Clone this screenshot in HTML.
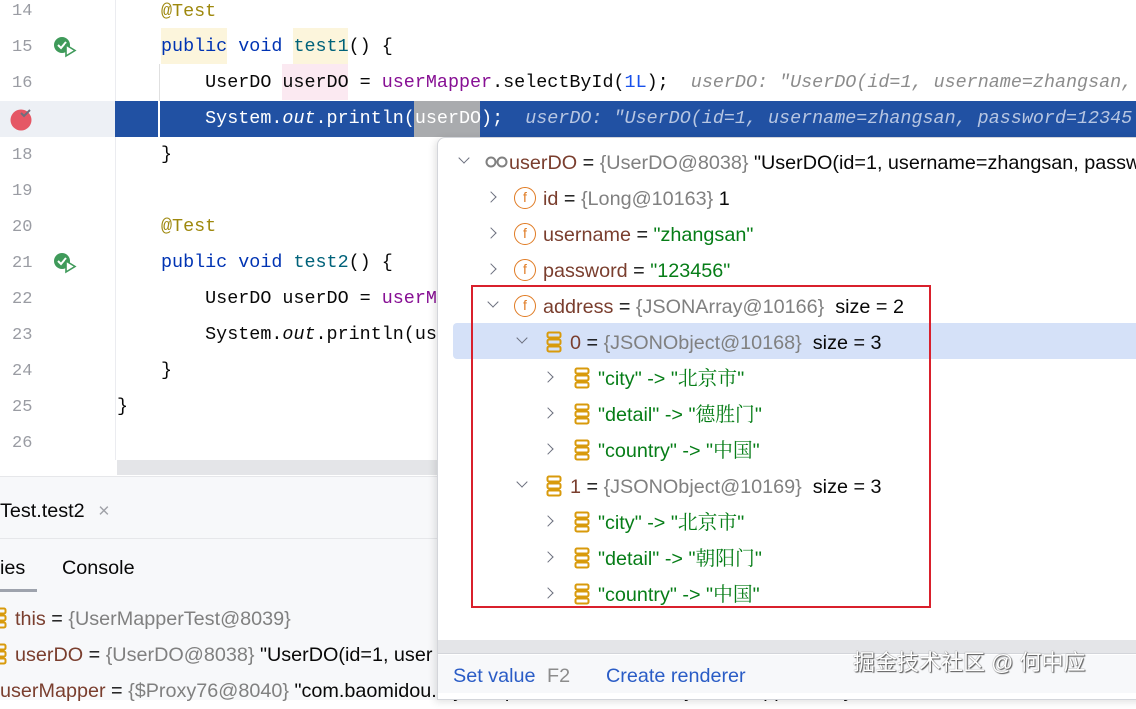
<!DOCTYPE html>
<html><head><meta charset="utf-8"><style>
*{margin:0;padding:0;box-sizing:border-box}
body{width:1136px;height:700px;overflow:hidden;background:#fff;position:relative;font-family:"Liberation Sans","Noto Sans CJK SC",sans-serif}
.a{position:absolute;white-space:nowrap}
.ln{position:absolute;left:12px;width:24px;font:17px "Liberation Mono",monospace;color:#9a9ca3;line-height:36px}
.code{position:absolute;font:18.4px "Liberation Mono",monospace;line-height:36px;color:#080808;white-space:pre}
.kw{color:#0033b3}.an{color:#9e880d}.fn{color:#00627a}.fld{color:#871094}.num{color:#1750eb}
.hint{color:#8c8c8c;font-style:italic}
.t{position:absolute;font-size:19.8px;line-height:36px;color:#080808;white-space:nowrap;margin-top:2px}
.g{color:#808080}.s{color:#067d17}.n{color:#871094}.v{color:#7a3e2e}
.cj{font-family:"Liberation Sans","Noto Serif CJK SC",serif}
.chev{position:absolute;width:8px;height:8px;border-right:1.5px solid #6c707e;border-bottom:1.5px solid #6c707e}
.r{transform:rotate(-45deg)}.d{transform:rotate(45deg)}
.fi{display:inline-block;width:22px;height:22px;border:1.6px solid #e07b23;border-radius:50%;color:#e07b23;font-size:14px;line-height:19px;text-align:center;vertical-align:middle;margin:-3px 7px 0 0;font-style:normal}
.ai{display:inline-block;width:16px;height:22px;vertical-align:middle;margin:-3px 8px 0 0}
</style></head><body>
<svg width="0" height="0" style="position:absolute"><defs><symbol id="arr" viewBox="0 0 16 22"><g fill="none" stroke="#d89a0b" stroke-width="2"><rect x="1.5" y="1.5" width="13" height="5" rx="1.5"/><rect x="1.5" y="8.5" width="13" height="5" rx="1.5"/><rect x="1.5" y="15.5" width="13" height="5" rx="1.5"/></g></symbol></defs></svg>
<!-- gutter -->
<div class="a" style="left:0;top:101px;width:115px;height:36px;background:#edf0f5"></div>
<div class="a" style="left:115px;top:0;width:1px;height:460px;background:#ebecf0"></div>
<div class="ln" style="top:-6px">14</div><div class="ln" style="top:30px">15</div><div class="ln" style="top:66px">16</div><div class="ln" style="top:138px">18</div><div class="ln" style="top:174px">19</div><div class="ln" style="top:210px">20</div><div class="ln" style="top:246px">21</div><div class="ln" style="top:282px">22</div><div class="ln" style="top:318px">23</div><div class="ln" style="top:354px">24</div><div class="ln" style="top:390px">25</div><div class="ln" style="top:426px">26</div>
<svg class="a" style="left:52px;top:36px" width="26" height="22"><circle cx="10" cy="9" r="8" fill="#3f9a5a"/><path d="M6 9l3 3 5-6" stroke="#fff" stroke-width="2" fill="none"/><path d="M14 9v11l9-5.5z" fill="#fff" stroke="#3f9a5a" stroke-width="1.6"/></svg>
<svg class="a" style="left:52px;top:252px" width="26" height="22"><circle cx="10" cy="9" r="8" fill="#3f9a5a"/><path d="M6 9l3 3 5-6" stroke="#fff" stroke-width="2" fill="none"/><path d="M14 9v11l9-5.5z" fill="#fff" stroke="#3f9a5a" stroke-width="1.6"/></svg>
<svg class="a" style="left:10px;top:107px" width="24" height="24"><circle cx="11" cy="13" r="10.5" fill="#e55765"/><path d="M20 3l-6 6-3-3" stroke="#6c707e" stroke-width="2" fill="none"/></svg>
<!-- highlights -->
<div class="a" style="left:115px;top:101px;width:1021px;height:36px;background:#2151a3"></div>
<div class="a" style="left:158px;top:101px;width:2px;height:36px;background:#fff"></div>
<div class="a" style="left:414px;top:101px;width:66px;height:36px;background:#a9abae"></div>
<div class="a" style="left:161px;top:28px;width:66px;height:36px;background:#fcf5dc"></div>
<div class="a" style="left:293px;top:28px;width:55px;height:36px;background:#fcf5dc"></div>
<div class="a" style="left:282px;top:64px;width:66px;height:36px;background:#fbe9f1"></div>
<div class="a" style="left:159px;top:64px;width:1px;height:37px;background:#e0e0e0"></div>
<div class="code" style="left:161px;top:-6px"><span class="an">@Test</span></div>
<div class="code" style="left:161px;top:29px"><span class="kw">public void</span> <span class="fn">test1</span>() {</div>
<div class="code" style="left:161px;top:65px">    UserDO userDO = <span class="fld">userMapper</span>.selectById(<span class="num">1L</span>);  <span class="hint">userDO: "UserDO(id=1, username=zhangsan, </span></div>
<div class="code" style="left:161px;top:101px;color:#fff">    System.<i>out</i>.println(userDO);  <span style="font-style:italic;color:#b7c6e2">userDO: "UserDO(id=1, username=zhangsan, password=12345</span></div>
<div class="code" style="left:161px;top:137px">}</div>
<div class="code" style="left:161px;top:209px"><span class="an">@Test</span></div>
<div class="code" style="left:161px;top:245px"><span class="kw">public void</span> <span class="fn">test2</span>() {</div>
<div class="code" style="left:161px;top:281px">    UserDO userDO = <span class="fld">userM</span></div>
<div class="code" style="left:161px;top:317px">    System.<i>out</i>.println(us</div>
<div class="code" style="left:161px;top:353px">}</div>
<div class="code" style="left:117px;top:389px">}</div>
<div class="a" style="left:117px;top:460px;width:330px;height:15px;background:#e4e5e8"></div>
<!-- bottom panel -->
<div class="a" style="left:0;top:476px;width:440px;height:224px;background:#f7f8fa;border-top:1px solid #e6e7ea"></div>
<div class="t" style="left:0;top:491px">Test.test2 <span style="color:#a0a2a8;margin-left:8px">×</span></div>
<div class="a" style="left:0;top:538px;width:440px;height:1px;background:#e6e7ea"></div>
<div class="t" style="left:0;top:548px">ies</div><div class="t" style="left:62px;top:548px">Console</div>
<div class="a" style="left:0;top:589px;width:37px;height:3px;background:#9ea3ad"></div>
<div class="t" style="left:-9px;top:599px"><svg class="ai"><use href="#arr"/></svg><span class="v">this</span> = <span class="g">{UserMapperTest@8039}</span></div>
<div class="t" style="left:-9px;top:635px"><svg class="ai"><use href="#arr"/></svg><span class="v">userDO</span> = <span class="g">{UserDO@8038}</span> "UserDO(id=1, user</div>
<div class="t" style="left:0;top:671px"><span class="v">userMapper</span> = <span class="g">{$Proxy76@8040}</span> "com.baomidou.mybatisplus.core.override.MybatisMapperProxy@</div>
<!-- popup -->
<div class="a" style="left:437px;top:137px;width:710px;height:563px;background:#fff;border:1px solid #d3d5da;border-top-left-radius:8px;box-shadow:-2px 2px 8px rgba(0,0,0,.12)"></div>
<div class="a" style="left:453px;top:323px;width:690px;height:36px;background:#d5e1f8;border-radius:4px 0 0 4px"></div>
<div class="chev d" style="left:460px;top:154px"></div>
<div class="t" style="left:485px;top:143px"><svg width="24" height="12" style="vertical-align:middle;margin-top:-3px"><g fill="none" stroke="#808080" stroke-width="2"><circle cx="6" cy="6" r="4.5"/><circle cx="17" cy="6" r="4.5"/></g></svg><span class="v">userDO</span> = <span class="g">{UserDO@8038}</span> "UserDO(id=1, username=zhangsan, password</div>
<div class="chev r" style="left:487px;top:193px"></div><div class="t" style="left:514px;top:179px"><i class="fi">f</i><span class="v">id</span> = <span class="g">{Long@10163}</span> 1</div>
<div class="chev r" style="left:487px;top:229px"></div><div class="t" style="left:514px;top:215px"><i class="fi">f</i><span class="v">username</span> = <span class="s">"zhangsan"</span></div>
<div class="chev r" style="left:487px;top:265px"></div><div class="t" style="left:514px;top:251px"><i class="fi">f</i><span class="v">password</span> = <span class="s">"123456"</span></div>
<div class="chev d" style="left:489px;top:298px"></div><div class="t" style="left:514px;top:287px"><i class="fi">f</i><span class="v">address</span> = <span class="g">{JSONArray@10166}</span>&nbsp; size = 2</div>
<div class="chev d" style="left:518px;top:334px"></div><div class="t" style="left:546px;top:323px"><svg class="ai"><use href="#arr"/></svg><span class="v">0</span> = <span class="g">{JSONObject@10168}</span>&nbsp; size = 3</div>
<div class="chev r" style="left:544px;top:373px"></div><div class="t cj" style="left:574px;top:359px"><svg class="ai"><use href="#arr"/></svg><span class="s">"city" -&gt; "北京市"</span></div>
<div class="chev r" style="left:544px;top:409px"></div><div class="t cj" style="left:574px;top:395px"><svg class="ai"><use href="#arr"/></svg><span class="s">"detail" -&gt; "德胜门"</span></div>
<div class="chev r" style="left:544px;top:445px"></div><div class="t cj" style="left:574px;top:431px"><svg class="ai"><use href="#arr"/></svg><span class="s">"country" -&gt; "中国"</span></div>
<div class="chev d" style="left:518px;top:478px"></div><div class="t" style="left:546px;top:467px"><svg class="ai"><use href="#arr"/></svg><span class="v">1</span> = <span class="g">{JSONObject@10169}</span>&nbsp; size = 3</div>
<div class="chev r" style="left:544px;top:517px"></div><div class="t cj" style="left:574px;top:503px"><svg class="ai"><use href="#arr"/></svg><span class="s">"city" -&gt; "北京市"</span></div>
<div class="chev r" style="left:544px;top:553px"></div><div class="t cj" style="left:574px;top:539px"><svg class="ai"><use href="#arr"/></svg><span class="s">"detail" -&gt; "朝阳门"</span></div>
<div class="chev r" style="left:544px;top:589px"></div><div class="t cj" style="left:574px;top:575px"><svg class="ai"><use href="#arr"/></svg><span class="s">"country" -&gt; "中国"</span></div>
<div class="a" style="left:471px;top:285px;width:460px;height:323px;border:2.5px solid #d9202c"></div>
<div class="a" style="left:438px;top:640px;width:698px;height:14px;background:#e4e5e8;border-bottom:1px solid #d3d5da"></div>
<div class="a" style="left:438px;top:655px;width:698px;height:38px;background:#f7f8fa"></div>
<div class="t" style="left:453px;top:656px;color:#2a5cc6">Set value <span style="color:#8c8c8c;margin-left:6px">F2</span></div>
<div class="t" style="left:606px;top:656px;color:#2a5cc6">Create renderer</div>
<div class="t" style="left:853px;top:643px;font-size:22px;color:#fff;text-shadow:0 0 1px #555,1px 1px 1px #555">掘金技术社区 @ 何中应</div>
</body></html>
